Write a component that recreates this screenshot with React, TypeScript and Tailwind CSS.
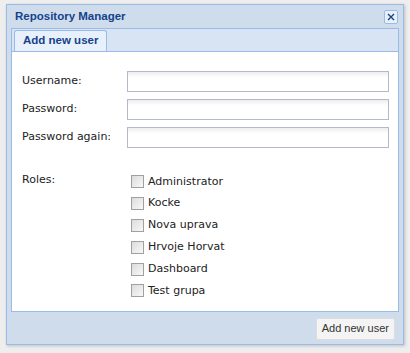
import React from 'react'

const roles = ['Administrator', 'Kocke', 'Nova uprava', 'Hrvoje Horvat', 'Dashboard', 'Test grupa']
const fields = ['Username:', 'Password:', 'Password again:']

const App = () => {
  return (
    <div className="w-[410px] h-[353px] bg-[#eeeeee] pt-[4px] pl-[6px]" style={{ fontFamily: '"DejaVu Sans", "Liberation Sans", sans-serif' }}>
      <div className="w-[398px] h-[341px] border border-[#99bbe8] bg-[#cfdcec] flex flex-col shadow-[1px_1px_3px_rgba(0,0,0,0.2)]">
        <div className="h-[23px] flex items-center justify-between pl-[8px] pr-[5px] pt-[1px]">
          <span className="text-[11.5px] font-bold text-[#15428b] font-['Liberation_Sans',sans-serif]">Repository Manager</span>
          <span className="w-[14px] h-[14px] border border-[#99bbe8] bg-[#e9f0fa] rounded-[2px] flex items-center justify-center">
            <svg width="10" height="10" viewBox="0 0 10 10">
              <path d="M2 2 L8 8 M8 2 L2 8" stroke="#15428b" strokeWidth="1.4" />
            </svg>
          </span>
        </div>
        <div className="mx-[4px] border border-[#99bbe8] flex flex-col">
          <div className="h-[23px] bg-[#d8e4f3] border-b border-[#99bbe8] flex items-end pl-[2px]">
            <div className="h-[21px] px-[8px] bg-[#e8f0fb] border border-b-0 border-[#99bbe8] rounded-t-[3px] flex items-center text-[11.5px] font-bold text-[#15428b] font-['Liberation_Sans',sans-serif]">
              Add new user
            </div>
          </div>
          <div className="bg-white h-[259px] pt-[19px] pl-[10px] text-[11px] text-[#222]">
            {fields.map((f) => (
              <div key={f} className="flex items-center h-[21px] mb-[7px]">
                <span className="w-[105px]">{f}</span>
                <div className="w-[262px] h-[21px] border border-[#b5b8c8] bg-gradient-to-b from-[#eeeeee] to-white to-[30%]" />
              </div>
            ))}
            <div className="flex mt-[23px]">
              <span className="w-[109px] pt-[1px]">Roles:</span>
              <div className="flex flex-col">
                {roles.map((r) => (
                  <div key={r} className="flex items-center h-[21.8px]">
                    <span className="w-[13px] h-[13px] border border-[#a0a0a0] bg-gradient-to-br from-[#dcdcdc] to-[#f8f8f8] mr-[4px]" />
                    <span>{r}</span>
                  </div>
                ))}
              </div>
            </div>
          </div>
        </div>
        <div className="flex-1 flex items-center justify-end pr-[8px] pt-[1px]">
          <div className="h-[22px] px-[5px] bg-[#f4f4f4] border border-[#dddddd] rounded-[2px] flex items-center text-[11px] text-[#333] font-['Liberation_Sans',sans-serif]">
            Add new user
          </div>
        </div>
      </div>
    </div>
  )
}

export default App
